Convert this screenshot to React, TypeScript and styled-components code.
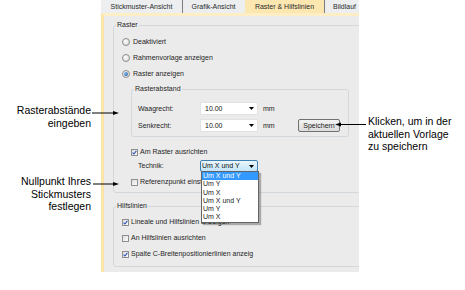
import React from "react";
import styled, { createGlobalStyle } from "styled-components";

const GlobalStyle = createGlobalStyle`
  body {
    margin: 0;
    background: #ffffff;
    font-family: "Liberation Sans", Arial, sans-serif;
  }
`;

const Page = styled.div`
  position: relative;
  width: 465px;
  height: 290px;
  display: flex;
  overflow: hidden;
  background: #ffffff;
`;

const LeftNotes = styled.div`
  flex: none;
  width: 101px;
  box-sizing: border-box;
  padding: 104px 10px 0 0;
  text-align: right;
`;

const RightNotes = styled.div`
  flex: 1;
  padding: 115px 0 0 9px;
`;

const Note = styled.p<{ $gap?: number }>`
  margin: ${(p) => p.$gap ?? 0}px 0 0 0;
  font-size: 10.5px;
  line-height: 12.5px;
  color: #000000;
`;

const Dialog = styled.div`
  flex: none;
  width: 258px;
  height: 272px;
  display: flex;
  flex-direction: column;
  overflow: hidden;
  font-size: 7px;
  line-height: 8px;
  color: #1e1e1e;
`;

const TabBar = styled.div`
  display: flex;
  height: 13px;
  background: #e9ecef;
`;

const Tab = styled.div<{ $w: number; $active?: boolean; $sep?: boolean }>`
  flex: none;
  width: ${(p) => p.$w}px;
  box-sizing: border-box;
  display: flex;
  align-items: center;
  justify-content: center;
  white-space: nowrap;
  background: ${(p) => (p.$active ? "#fde7b1" : "#eceef0")};
  border-right: 1px solid ${(p) => (p.$sep ? "#7c7c7c" : "transparent")};
  color: #2a2a2a;
`;

const Panel = styled.div`
  height: 259px;
  box-sizing: border-box;
  border-top: 3px solid #fdeec6;
  border-left: 3px solid #fbe4a8;
  background: #ebebeb;
  padding: 5px 0 0 9px;
`;

const GroupBox = styled.fieldset<{ $w: number; $gap?: number }>`
  width: ${(p) => p.$w}px;
  box-sizing: border-box;
  min-width: 0;
  margin: ${(p) => p.$gap ?? 0}px 0 0 0;
  padding: 0 0 0 2px;
  border: 1px solid #d3d8dc;
  border-radius: 3px;
`;

const Legend = styled.legend`
  padding: 0 1px;
  font-size: 7px;
  line-height: 8px;
  color: #1e1e1e;
`;

const GroupBody = styled.div<{ $top: number; $bottom: number; $left: number }>`
  display: flex;
  flex-direction: column;
  padding: ${(p) => p.$top}px 0 ${(p) => p.$bottom}px ${(p) => p.$left}px;
`;

const Indent = styled.div`
  display: flex;
  flex-direction: column;
  margin-left: 9px;
`;

const OptionRow = styled.div<{ $gap?: number }>`
  height: 16px;
  margin-top: ${(p) => p.$gap ?? 0}px;
  display: flex;
  align-items: center;
  gap: 2px;
  white-space: nowrap;
`;

const Radio = styled.span<{ $on?: boolean }>`
  flex: none;
  width: 8px;
  height: 8px;
  box-sizing: border-box;
  margin-right: 1px;
  border-radius: 50%;
  border: 1px solid #8c8c8c;
  background: radial-gradient(circle at 40% 35%, #ffffff, #d4d4d4);
  display: flex;
  align-items: center;
  justify-content: center;

  &::after {
    content: "";
    display: ${(p) => (p.$on ? "block" : "none")};
    width: 4px;
    height: 4px;
    border-radius: 50%;
    background: radial-gradient(circle at 35% 35%, #7fb6ec, #1c56a0);
  }
`;

const Box = styled.span`
  flex: none;
  width: 7px;
  height: 7px;
  box-sizing: border-box;
  border: 1px solid #8e8e8e;
  background: linear-gradient(135deg, #dedede, #fbfbfb);
  display: flex;
`;

const Check = ({ on }: { on?: boolean }) => (
  <Box>
    {on && (
      <svg width="5" height="5" viewBox="0 0 5 5">
        <path d="M0.6 2.6 L1.9 4 L4.4 0.8" fill="none" stroke="#2a52b4" strokeWidth="1.1" />
      </svg>
    )}
  </Box>
);

const FieldRow = styled.div<{ $h: number }>`
  height: ${(p) => p.$h}px;
  display: flex;
  align-items: center;
  padding-left: 4px;
  white-space: nowrap;
`;

const FieldLabel = styled.span`
  flex: none;
  width: 62px;
`;

const Combo = styled.div<{ $active?: boolean }>`
  position: relative;
  flex: none;
  width: 58px;
  height: ${(p) => (p.$active ? 12 : 13)}px;
  box-sizing: border-box;
  display: flex;
  align-items: center;
  justify-content: space-between;
  padding: 0 3px 0 ${(p) => (p.$active ? 1 : 4)}px;
  border: 1px solid ${(p) => (p.$active ? "#3c7fb1" : "#e1e2e4")};
  border-radius: ${(p) => (p.$active ? 2 : 0)}px;
  background: ${(p) =>
    p.$active ? "linear-gradient(#eaf6fd, #c2e4f8)" : "#ffffff"};
  color: #111111;
`;

const Arrow = () => (
  <svg width="5" height="3" viewBox="0 0 5 3">
    <polygon points="0,0 5,0 2.5,3" fill="#000000" />
  </svg>
);

const Unit = styled.span`
  flex: none;
  width: 35px;
  margin-left: 5px;
`;

const Button = styled.div`
  flex: none;
  width: 42px;
  height: 13px;
  box-sizing: border-box;
  display: flex;
  align-items: center;
  justify-content: center;
  border: 1px solid #707070;
  border-radius: 2px;
  background: linear-gradient(#f3f3f3, #dcdcdc);
  color: #1a1a1a;
`;

const TechnikRow = styled.div`
  height: 12px;
  display: flex;
  align-items: center;
  padding-left: 7px;
`;

const ListBox = styled.ul`
  position: absolute;
  z-index: 2;
  top: 100%;
  left: 0;
  width: 58px;
  box-sizing: border-box;
  margin: 0;
  padding: 0;
  list-style: none;
  background: #ffffff;
  border: 1px solid #646464;
  box-shadow: 2px 2px 1px rgba(0, 0, 0, 0.28);
`;

const ListItem = styled.li<{ $sel?: boolean }>`
  height: 8.3px;
  line-height: 8.3px;
  padding-left: 1px;
  white-space: nowrap;
  background: ${(p) => (p.$sel ? "#3399ff" : "transparent")};
  color: ${(p) => (p.$sel ? "#ffffff" : "#1a1a1a")};
`;

const Callouts = styled.svg`
  position: absolute;
  top: 0;
  left: 0;
  pointer-events: none;
`;

const techniken = ["Um X und Y", "Um Y", "Um X", "Um X und Y", "Um Y", "Um X"];

const App = () => {
  return (
    <Page>
      <GlobalStyle />
      <LeftNotes>
        <Note>
          Rasterabstände
          <br />
          eingeben
        </Note>
        <Note $gap={46}>
          Nullpunkt Ihres
          <br />
          Stickmusters
          <br />
          festlegen
        </Note>
      </LeftNotes>

      <Dialog>
        <TabBar>
          <Tab $w={82} $sep>
            Stickmuster-Ansicht
          </Tab>
          <Tab $w={62}>Grafik-Ansicht</Tab>
          <Tab $w={80} $active $sep>
            Raster &amp; Hilfslinien
          </Tab>
          <Tab $w={40}>Bildlauf</Tab>
        </TabBar>

        <Panel>
          <GroupBox $w={255}>
            <Legend>Raster</Legend>
            <GroupBody $top={5} $bottom={2} $left={6}>
              <OptionRow>
                <Radio />
                Deaktiviert
              </OptionRow>
              <OptionRow>
                <Radio />
                Rahmenvorlage anzeigen
              </OptionRow>
              <OptionRow>
                <Radio $on />
                Raster anzeigen
              </OptionRow>

              <Indent>
                <GroupBox $w={218} $gap={3}>
                  <Legend>Rasterabstand</Legend>
                  <GroupBody $top={7} $bottom={2} $left={0}>
                    <FieldRow $h={17}>
                      <FieldLabel>Waagrecht:</FieldLabel>
                      <Combo>
                        10.00
                        <Arrow />
                      </Combo>
                      <Unit>mm</Unit>
                    </FieldRow>
                    <FieldRow $h={17}>
                      <FieldLabel>Senkrecht:</FieldLabel>
                      <Combo>
                        10.00
                        <Arrow />
                      </Combo>
                      <Unit>mm</Unit>
                      <Button>Speichern</Button>
                    </FieldRow>
                  </GroupBody>
                </GroupBox>

                <OptionRow $gap={7}>
                  <Check on />
                  Am Raster ausrichten
                </OptionRow>
                <TechnikRow>
                  <FieldLabel>Technik:</FieldLabel>
                  <Combo $active>
                    Um X und Y
                    <Arrow />
                    <ListBox>
                      {techniken.map((t, i) => (
                        <ListItem key={i} $sel={i === 0}>
                          {t}
                        </ListItem>
                      ))}
                    </ListBox>
                  </Combo>
                </TechnikRow>
                <OptionRow $gap={2}>
                  <Check />
                  Referenzpunkt einstellen
                </OptionRow>
              </Indent>
            </GroupBody>
          </GroupBox>

          <GroupBox $w={255} $gap={9}>
            <Legend>Hilfslinien</Legend>
            <GroupBody $top={4} $bottom={4} $left={6}>
              <OptionRow>
                <Check on />
                Lineale und Hilfslinien anzeigen
              </OptionRow>
              <OptionRow>
                <Check />
                An Hilfslinien ausrichten
              </OptionRow>
              <OptionRow>
                <Check on />
                Spalte C-Breitenpositionierlinien anzeig
              </OptionRow>
            </GroupBody>
          </GroupBox>
        </Panel>
      </Dialog>

      <RightNotes>
        <Note>
          Klicken, um in der
          <br />
          aktuellen Vorlage
          <br />
          zu speichern
        </Note>
      </RightNotes>

      <Callouts width="465" height="290" viewBox="0 0 465 290">
        <line x1="92" y1="113" x2="114" y2="113" stroke="#000" strokeWidth="1" />
        <polygon points="119,113 113,111 113,115" fill="#000" />
        <line x1="93" y1="184" x2="114" y2="184" stroke="#000" strokeWidth="1" />
        <polygon points="119,184 113,182 113,186" fill="#000" />
        <line x1="366" y1="124.5" x2="341" y2="124.5" stroke="#000" strokeWidth="1" />
        <polygon points="335,124.5 341,122.5 341,126.5" fill="#000" />
      </Callouts>
    </Page>
  );
};

export default App;
